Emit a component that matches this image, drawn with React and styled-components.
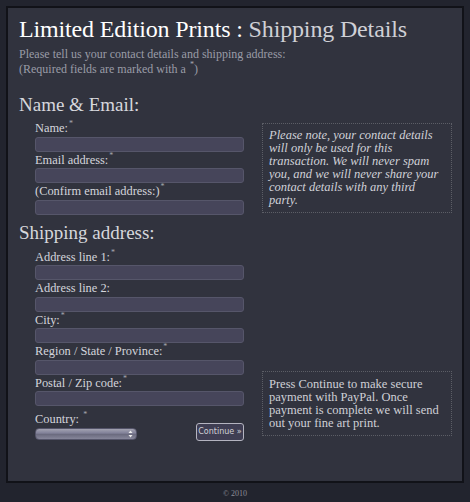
import React from "react";
import styled, { createGlobalStyle } from "styled-components";

const GlobalStyle = createGlobalStyle`
  html, body {
    margin: 0;
    padding: 0;
    background: #22242e;
  }
  body {
    font-family: "Liberation Serif", "DejaVu Serif", serif;
  }
`;

const Page = styled.div`
  width: 470px;
  height: 502px;
  padding: 6px 6px 0 6px;
  box-sizing: border-box;
  display: flex;
  flex-direction: column;
`;

const Panel = styled.div`
  height: 477px;
  box-sizing: border-box;
  background: #31333e;
  border: 2px solid #111218;
  padding: 7px 10px 0 11px;
`;

const Title = styled.h1`
  margin: 0;
  font-size: 24px;
  font-weight: normal;
  line-height: 28px;
  letter-spacing: -0.15px;
  color: #ffffff;
`;

const Light = styled.span`
  color: #cfd0d6;
`;

const Intro = styled.p`
  margin: 4px 0 0;
  font-size: 12px;
  line-height: 15px;
  color: #9a9ca7;
`;

const Heading = styled.h2`
  margin: ${(p) => p.$top}px 0 0;
  font-size: 19px;
  font-weight: normal;
  line-height: 22px;
  color: #d6d7dc;
`;

const Section = styled.div`
  display: grid;
  grid-template-columns: 225px 190px;
  column-gap: 18px;
  align-items: ${(p) => p.$align || "start"};
  margin-top: ${(p) => p.$top || 5}px;
`;

const Fields = styled.div`
  padding-left: 16px;
  display: flex;
  flex-direction: column;
`;

const Label = styled.label`
  display: block;
  font-size: 12.4px;
  line-height: 16.5px;
  color: #d4d5dc;
`;

const Star = styled.sup`
  font-size: 8px;
  color: #a8a9b2;
  margin-left: 1px;
  vertical-align: 6px;
  line-height: 0;
`;

const Input = styled.input`
  display: block;
  width: 209px;
  height: 15px;
  box-sizing: border-box;
  margin: 0;
  padding: 0 4px;
  background: #46455a;
  border: 1px solid #56566a;
  border-radius: 3px;
  outline: none;
`;

const BottomRow = styled.div`
  display: flex;
  align-items: flex-end;
  justify-content: space-between;
  width: 209px;
  margin-top: 5px;
`;

const SelectBox = styled.div`
  width: 102px;
  height: 12px;
  box-sizing: border-box;
  border-radius: 4px;
  border: 1px solid #55556a;
  background: linear-gradient(#a3a3b1 0%, #82829a 40%, #6c6c80 55%, #86869a 100%);
  display: flex;
  justify-content: flex-end;
  align-items: center;
  padding-right: 3px;
`;

const Button = styled.button`
  height: 18px;
  width: 48px;
  padding: 0;
  box-sizing: border-box;
  background: #3f3e53;
  border: 1px solid #b4b4c0;
  border-radius: 3px;
  color: #d0d0d8;
  font-family: "DejaVu Sans", "Liberation Sans", sans-serif;
  font-size: 8px;
  margin-bottom: -1px;
`;

const Note = styled.div`
  border: 1px dotted #5c5e66;
  padding: ${(p) => (p.$italic ? "5px 6px 5px 6px" : "6px 6px 5px 6px")};
  font-size: 12.5px;
  line-height: 13px;
  color: ${(p) => (p.$italic ? "#d0d1d8" : "#cfd0d6")};
  font-style: ${(p) => (p.$italic ? "italic" : "normal")};
  margin-top: ${(p) => p.$top || 0}px;
  margin-bottom: ${(p) => p.$bottom || 0}px;
`;

const Footer = styled.div`
  text-align: center;
  font-size: 8px;
  color: #8d8e96;
  padding-top: 6px;
`;

function Field({ label, required }) {
  return (
    <>
      <Label>
        {label}
        {required && <Star>*</Star>}
      </Label>
      <Input type="text" />
    </>
  );
}

export default function App() {
  return (
    <Page>
      <GlobalStyle />
      <Panel>
        <Title>
          Limited Edition Prints : <Light>Shipping Details</Light>
        </Title>
        <Intro>
          Please tell us your contact details and shipping address:
          <br />
          (Required fields are marked with a <Star>*</Star>)
        </Intro>

        <Heading $top={17}>Name &amp; Email:</Heading>
        <Section $top={4}>
          <Fields>
            <Field label="Name:" required />
            <Field label="Email address:" required />
            <Field label="(Confirm email address:)" required />
          </Fields>
          <Note $italic $top={3}>
            Please note, your contact details will only be used for this
            transaction. We will never spam you, and we will never share your
            contact details with any third party.
          </Note>
        </Section>

        <Heading $top={7}>Shipping address:</Heading>
        <Section $align="end" $top={5}>
          <Fields>
            <Field label="Address line 1:" required />
            <Field label="Address line 2:" />
            <Field label="City:" required />
            <Field label="Region / State / Province:" required />
            <Field label="Postal / Zip code:" required />
            <BottomRow>
              <div>
                <Label>
                  Country: <Star>*</Star>
                </Label>
                <SelectBox>
                  <svg width="5" height="8" viewBox="0 0 5 8">
                    <path d="M2.5 0.5 L4.5 3 L0.5 3 Z" fill="#eee" />
                    <path d="M2.5 7.5 L4.5 5 L0.5 5 Z" fill="#eee" />
                  </svg>
                </SelectBox>
              </div>
              <Button type="button">Continue »</Button>
            </BottomRow>
          </Fields>
          <Note $bottom={4}>
            Press Continue to make secure payment with PayPal. Once payment is
            complete we will send out your fine art print.
          </Note>
        </Section>
      </Panel>
      <Footer>© 2010</Footer>
    </Page>
  );
}
